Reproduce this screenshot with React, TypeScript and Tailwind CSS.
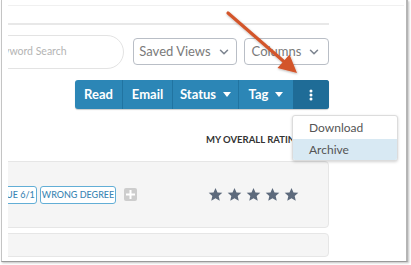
import React from "react";
import { ChevronDown } from "lucide-react";

const Star = () => (
  <svg width="15" height="15" viewBox="0 0 24 24">
    <path
      d="M12 1.5l3.2 7.1 7.7.7-5.8 5.1 1.7 7.6L12 18l-6.8 4 1.7-7.6L1.1 9.3l7.7-.7z"
      fill="#5d6a7c"
    />
  </svg>
);

const Caret = () => (
  <svg width="8" height="5" viewBox="0 0 8 5" className="ml-[7px]">
    <path d="M0 0h8L4 5z" fill="#ffffff" />
  </svg>
);

export default function App() {
  return (
    <div
      className="relative w-[411px] h-[265px] bg-white overflow-hidden"
      style={{ fontFamily: "Lato, 'Open Sans', sans-serif" }}
    >
      <div className="relative ml-[1px] w-[407px] h-[262px] border-l border-b border-r-2 border-l-[#c4c4c4] border-b-[#9a9a9a] border-r-[#b5b5b5] shadow-[1px_1px_2px_rgba(0,0,0,0.25)] bg-white">
        <div className="ml-[6px] h-full overflow-hidden">
          <div className="mt-[5px] w-[396px] border-t border-[#f0f0f0]" />
          <div className="mt-[17px] w-[321px] border-t-2 border-[#e8e8e8]" />
          {/* search row */}
          <div className="mt-[10px] flex items-start w-[321px]">
            <div className="ml-[-33px] w-[149px] h-[34px] rounded-full border border-[#e3e3e3] flex items-center pl-[16px] text-[10.5px] text-[#b4b4b4] whitespace-nowrap">
              Keyword Search
            </div>
            <div className="ml-[9px] mt-[3px] w-[104px] h-[27px] rounded-[4px] border border-[#b9bec6] flex items-center justify-center gap-[6px] text-[13px] text-[#7a7a7a]">
              Saved Views
              <ChevronDown size={14} strokeWidth={2.6} color="#7d8590" />
            </div>
            <div className="ml-[7px] mt-[3px] w-[85px] h-[27px] rounded-[4px] border border-[#b9bec6] flex items-center justify-center gap-[6px] text-[13px] text-[#7a7a7a]">
              Columns
              <ChevronDown size={14} strokeWidth={2.6} color="#7d8590" />
            </div>
          </div>
          {/* toolbar */}
          <div className="mt-[11px] ml-[67px] w-[254px] h-[29px] rounded-[3px] bg-[#2c86b6] flex text-white font-bold text-[13px] overflow-hidden shadow-[0_1px_1px_rgba(0,0,0,0.2)]">
            <div className="w-[48px] flex items-center justify-center border-r border-[#2174a1]">Read</div>
            <div className="w-[50px] flex items-center justify-center border-r border-[#2174a1]">Email</div>
            <div className="w-[66px] flex items-center justify-center border-r border-[#2174a1]">
              Status
              <Caret />
            </div>
            <div className="w-[54px] flex items-center justify-center">
              Tag
              <Caret />
            </div>
            <div className="flex-1 bg-[#1f6c97] flex items-center justify-center">
              <svg width="4" height="12" viewBox="0 0 4 12">
                <circle cx="2" cy="2" r="1.5" fill="#fff" />
                <circle cx="2" cy="6" r="1.5" fill="#fff" />
                <circle cx="2" cy="10" r="1.5" fill="#fff" />
              </svg>
            </div>
          </div>
          {/* header */}
          <div className="mt-[25px] ml-[198px] text-[9.5px] font-bold text-[#333] leading-[12px] whitespace-nowrap">
            MY OVERALL RATING
          </div>
          {/* card 1 */}
          <div className="mt-[15px] ml-[-4px] w-[325px] h-[67px] bg-[#f5f5f5] border border-[#e6e6e6] rounded-[4px] flex items-center">
            <div className="ml-[-8px] h-[18px] w-[40px] border border-[#62aed6] rounded-[3px] bg-white flex items-center justify-center text-[9px] text-[#3b86b4] font-medium whitespace-nowrap">
              DUE 6/1
            </div>
            <div className="ml-[3px] h-[18px] w-[76px] border border-[#62aed6] rounded-[3px] bg-white flex items-center justify-center text-[9px] text-[#3b86b4] font-medium whitespace-nowrap">
              WRONG DEGREE
            </div>
            <div className="ml-[8px] w-[13px] h-[13px] rounded-[2px] bg-[#cdcdcd] flex items-center justify-center">
              <svg width="9" height="9" viewBox="0 0 9 9">
                <path d="M3.5 0h2v3.5H9v2H5.5V9h-2V5.5H0v-2h3.5z" fill="#fff" />
              </svg>
            </div>
            <div className="ml-[71px] flex gap-[4px]">
              <Star />
              <Star />
              <Star />
              <Star />
              <Star />
            </div>
          </div>
          {/* card 2 */}
          <div className="mt-[5px] ml-[-4px] w-[325px] h-[24px] bg-[#f5f5f5] border border-[#e6e6e6] rounded-[4px]" />
        </div>
      </div>
      {/* dropdown menu */}
      <div className="absolute left-[292px] top-[115px] w-[106px] h-[46px] bg-white border border-[#dcdcdc] rounded-[3px] shadow-[0_1px_3px_rgba(0,0,0,0.18)] text-[12px] text-[#555] overflow-hidden">
        <div className="h-[23px] flex items-center pl-[16px]">Download</div>
        <div className="h-[22px] flex items-center pl-[16px] bg-[#d8e9f3]">Archive</div>
      </div>
      {/* arrow */}
      <svg className="absolute left-0 top-0" width="411" height="265" viewBox="0 0 411 265">
        <defs>
          <filter id="sh" x="-20%" y="-20%" width="140%" height="140%">
            <feDropShadow dx="0.5" dy="1" stdDeviation="1" floodColor="#000" floodOpacity="0.3" />
          </filter>
        </defs>
        <g filter="url(#sh)">
          <line x1="228" y1="13" x2="285" y2="62.5" stroke="#d3552b" strokeWidth="3.2" strokeLinecap="round" />
          <polygon points="297,73 277.5,68 289.5,54.5" fill="#d3552b" />
        </g>
      </svg>
    </div>
  );
}
